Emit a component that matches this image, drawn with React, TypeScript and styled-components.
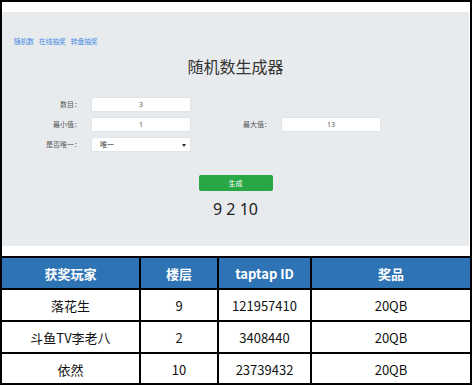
import styled, { createGlobalStyle } from 'styled-components';

const winners = [
  { name: '落花生', floor: '9', id: '121957410', prize: '20QB' },
  { name: '斗鱼TV李老八', floor: '2', id: '3408440', prize: '20QB' },
  { name: '依然', floor: '10', id: '23739432', prize: '20QB' },
];

export default function App() {
  return (
    <>
      <GlobalStyle />
      <Frame>
        <Panel>
          <Nav>
            <NavLink>随机数</NavLink>
            <NavLink>在线抽奖</NavLink>
            <NavLink>转盘抽奖</NavLink>
          </Nav>
          <Title>随机数生成器</Title>

          <Form>
            <Label>数目：</Label>
            <Field readOnly value="3" />
            <Spacer />

            <Label>最小值：</Label>
            <Field readOnly value="1" />
            <Label>最大值：</Label>
            <Field readOnly value="13" />

            <Label>是否唯一：</Label>
            <Select>
              唯一
              <Caret />
            </Select>
          </Form>

          <GenerateButton>生成</GenerateButton>
          <Result>9 2 10</Result>
        </Panel>

        <Table>
          <thead>
            <tr>
              <Th>获奖玩家</Th>
              <Th>楼层</Th>
              <Th>taptap ID</Th>
              <Th>奖品</Th>
            </tr>
          </thead>
          <tbody>
            {winners.map((w) => (
              <tr key={w.id}>
                <Td>{w.name}</Td>
                <Td>{w.floor}</Td>
                <Td>{w.id}</Td>
                <Td>{w.prize}</Td>
              </tr>
            ))}
          </tbody>
        </Table>
      </Frame>
    </>
  );
}

const GlobalStyle = createGlobalStyle`
  * {
    box-sizing: border-box;
  }
  body {
    margin: 0;
    background: #fff;
    font-family: "Noto Sans", "Noto Sans CJK SC", sans-serif;
  }
`;

const Frame = styled.div`
  width: 472px;
  height: 385px;
  border: 2px solid #000;
  padding-top: 10px;
  background: #fff;
`;

const Panel = styled.div`
  height: 234px;
  margin-right: 1px;
  padding-top: 25px;
  background: #e8ebee;
  display: flex;
  flex-direction: column;
`;

const Nav = styled.div`
  display: flex;
  gap: 5px;
  padding-left: 12px;
  line-height: 10px;
  font-size: 6.7px;
`;

const NavLink = styled.a`
  color: #3f8ae2;
  cursor: pointer;
`;

const Title = styled.h1`
  margin: 9px 0 0;
  text-align: center;
  font-size: 16px;
  line-height: 20px;
  font-weight: 400;
  color: #333;
  font-family: "Noto Sans CJK SC", sans-serif;
`;

const Form = styled.div`
  margin-top: 21px;
  display: grid;
  grid-template-columns: 89px 101px 89px 101px;
  grid-auto-rows: 15px;
  row-gap: 5px;
`;

const Label = styled.label`
  text-align: right;
  padding-right: 10px;
  font-size: 7px;
  line-height: 15px;
  color: #555;
  font-family: "Noto Sans CJK SC", sans-serif;
`;

const Spacer = styled.div`
  grid-column: span 2;
`;

const Field = styled.input`
  width: 100px;
  height: 15px;
  border: 1px solid #e1e4e7;
  border-radius: 2px;
  background: #fff;
  padding: 0;
  text-align: center;
  font-size: 7px;
  color: #555;
  font-family: "Noto Sans", sans-serif;
  outline: none;
`;

const Select = styled.div`
  position: relative;
  width: 100px;
  height: 15px;
  border: 1px solid #e1e4e7;
  border-radius: 2px;
  background: #fff;
  padding-left: 8px;
  font-size: 7px;
  line-height: 13px;
  color: #333;
  font-family: "Noto Sans CJK SC", sans-serif;
`;

const Caret = styled.span`
  position: absolute;
  right: 4px;
  top: 6px;
  border-left: 2px solid transparent;
  border-right: 2px solid transparent;
  border-top: 3px solid #333;
`;

const GenerateButton = styled.button`
  align-self: center;
  margin-top: 23px;
  width: 74px;
  height: 16px;
  padding: 0;
  border: none;
  border-radius: 2px;
  background: #28a745;
  color: #fff;
  font-size: 7px;
  font-family: "Noto Sans CJK SC", sans-serif;
  cursor: pointer;
`;

const Result = styled.div`
  margin-top: 8px;
  text-align: center;
  font-size: 16px;
  line-height: 20px;
  color: #222;
  font-family: "Noto Sans", sans-serif;
`;

const Table = styled.table`
  width: 100%;
  margin-top: 10px;
  border-collapse: collapse;
  table-layout: fixed;
  font-family: "Noto Sans CJK SC", sans-serif;
  font-size: 13px;

  th:nth-child(1) { width: 138px; }
  th:nth-child(2) { width: 78px; }
  th:nth-child(3) { width: 93px; }

  tr > *:first-child { border-left: none; }
  tr > *:last-child { border-right: none; }
  tbody tr:last-child td { border-bottom: none; }
`;

const Th = styled.th`
  height: 32px;
  padding: 0;
  border: 2px solid #000;
  background: #2e74b5;
  color: #fff;
  font-weight: 700;
  text-align: center;
`;

const Td = styled.td`
  height: 32px;
  padding: 0;
  border: 2px solid #000;
  color: #111;
  text-align: center;
`;
